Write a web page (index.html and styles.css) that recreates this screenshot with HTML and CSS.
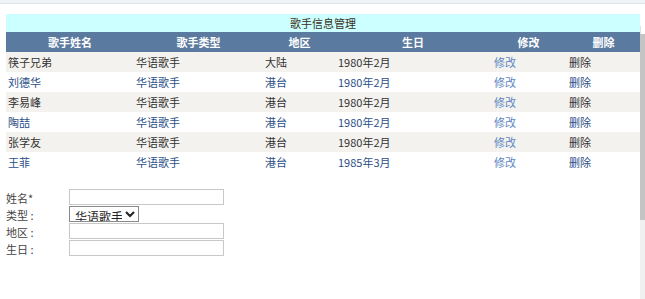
FILE: index.html
```html
<!DOCTYPE html>
<html lang="zh-CN">
<head>
  <meta charset="UTF-8">
  <title>歌手信息管理</title>
  <link rel="stylesheet" href="styles.css">
</head>
<body>
  <div class="topbar"></div>
  <div class="page">
    <div class="main">
      <!-- Singer list -->
      <table class="singers">
        <caption>歌手信息管理</caption>
        <thead>
          <tr>
            <th class="c-name">歌手姓名</th>
            <th class="c-type">歌手类型</th>
            <th class="c-area">地区</th>
            <th class="c-birth">生日</th>
            <th class="c-edit">修改</th>
            <th class="c-del">删除</th>
          </tr>
        </thead>
        <tbody>
          <tr><td>筷子兄弟</td><td>华语歌手</td><td>大陆</td><td>1980年2月</td><td><a href="#">修改</a></td><td>删除</td></tr>
          <tr><td>刘德华</td><td>华语歌手</td><td>港台</td><td>1980年2月</td><td><a href="#">修改</a></td><td>删除</td></tr>
          <tr><td>李易峰</td><td>华语歌手</td><td>港台</td><td>1980年2月</td><td><a href="#">修改</a></td><td>删除</td></tr>
          <tr><td>陶喆</td><td>华语歌手</td><td>港台</td><td>1980年2月</td><td><a href="#">修改</a></td><td>删除</td></tr>
          <tr><td>张学友</td><td>华语歌手</td><td>港台</td><td>1980年2月</td><td><a href="#">修改</a></td><td>删除</td></tr>
          <tr><td>王菲</td><td>华语歌手</td><td>港台</td><td>1985年3月</td><td><a href="#">修改</a></td><td>删除</td></tr>
        </tbody>
      </table>

      <!-- Add form -->
      <form class="singer-form">
        <div class="form-row">
          <label>姓名*</label>
          <input type="text" class="field">
        </div>
        <div class="form-row">
          <label>类型 :</label>
          <select class="type-select">
            <option>华语歌手</option>
            <option>欧美歌手</option>
            <option>日韩歌手</option>
          </select>
        </div>
        <div class="form-row">
          <label>地区 :</label>
          <input type="text" class="field">
        </div>
        <div class="form-row">
          <label>生日 :</label>
          <input type="text" class="field">
        </div>
      </form>
    </div>
    <!-- Scrollbar edge -->
    <div class="scrollbar">
      <div class="arrow"></div>
      <div class="thumb"></div>
    </div>
  </div>
</body>
</html>
```

FILE: styles.css
```css
body {
  margin: 0;
  font-family: "Noto Sans CJK SC", "Noto Sans", sans-serif;
  font-size: 11px;
  color: #333;
  background: #fff;
}
.topbar {
  height: 3px;
  background: #eef3f7;
  border-bottom: 1px solid #dde5ec;
}
.page {
  display: flex;
  height: 295px;
}
.main {
  flex: 1;
  padding: 10px 0 0 6px;
}
.singers {
  width: 634px;
  border-collapse: collapse;
  table-layout: fixed;
}
.singers caption {
  height: 18px;
  line-height: 18px;
  background: #ccffff;
  color: #3a3020;
  text-align: center;
}
.singers th {
  height: 20px;
  padding: 0;
  background: #5a7a9f;
  color: #fff;
  font-weight: bold;
  text-align: center;
}
.singers td {
  height: 20px;
  padding: 0 0 0 2px;
  text-align: left;
}
.c-name { width: 128px; }
.c-type { width: 129px; }
.c-area { width: 73px; }
.c-birth { width: 154px; }
.c-edit { width: 77px; }
.singers tbody tr:nth-child(odd) {
  background: #f4f2ef;
  color: #333;
}
.singers tbody tr:nth-child(even) {
  color: #2c4f88;
}
.singers td:nth-child(5) {
  padding-left: 4px;
}
.singers a {
  color: #5b86bf;
  text-decoration: none;
}
.singer-form {
  margin-top: 17px;
}
.form-row {
  display: flex;
  align-items: center;
}
.form-row label {
  width: 63px;
  color: #444;
}
.field {
  width: 155px;
  height: 16px;
  box-sizing: border-box;
  border: 1px solid #c8c8c8;
  padding: 0 2px;
  margin: 0 0 1px 0;
  font-size: 11px;
}
.type-select {
  width: 70px;
  height: 16px;
  box-sizing: border-box;
  border: 1px solid #8a8a8a;
  border-radius: 0;
  padding: 0 0 0 1px;
  margin: 0 0 1px 0;
  font-family: "Noto Sans CJK SC", sans-serif;
  font-size: 12px;
  background: #fff;
  color: #222;
}
.scrollbar {
  width: 5px;
  padding-top: 22px;
  display: flex;
  flex-direction: column;
}
.arrow {
  height: 8px;
  background: #fff;
  border-left: 1px solid #e0e0e0;
}
.thumb {
  height: 186px;
  background: #c4c4c4;
  box-shadow: 0 110px 0 #f0f0f0;
}
```
